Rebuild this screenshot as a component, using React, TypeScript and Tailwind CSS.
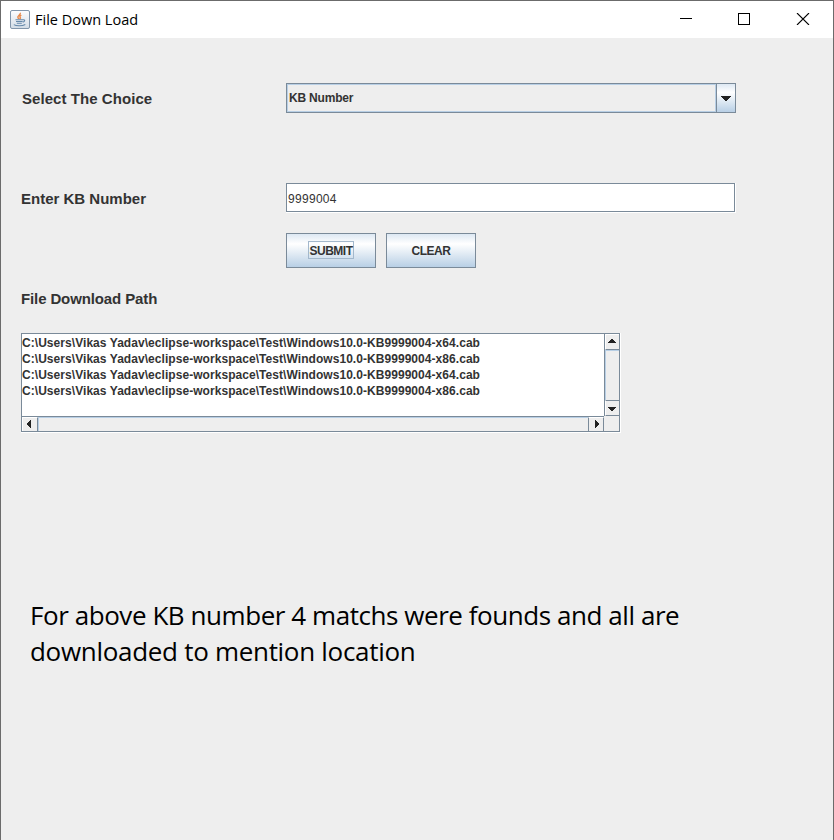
import React from "react";

const files = [
  "C:\\Users\\Vikas Yadav\\eclipse-workspace\\Test\\Windows10.0-KB9999004-x64.cab",
  "C:\\Users\\Vikas Yadav\\eclipse-workspace\\Test\\Windows10.0-KB9999004-x86.cab",
  "C:\\Users\\Vikas Yadav\\eclipse-workspace\\Test\\Windows10.0-KB9999004-x64.cab",
  "C:\\Users\\Vikas Yadav\\eclipse-workspace\\Test\\Windows10.0-KB9999004-x86.cab",
];

const metal = "bg-[linear-gradient(180deg,#dde8f3_0%,#ffffff_30%,#b8cfe5_100%)]";

function JavaIcon() {
  return (
    <svg width="20" height="19" viewBox="0 0 20 19" fill="none">
      <defs>
        <linearGradient id="tile" x1="0" y1="0" x2="0" y2="1">
          <stop offset="0" stopColor="#fdfdfe" />
          <stop offset="1" stopColor="#d2dce6" />
        </linearGradient>
      </defs>
      <rect x="0.5" y="0.5" width="19" height="18" rx="1.5" fill="url(#tile)" stroke="#8296ab" />
      <path d="M10.300 2.800c.8 2-3.400 2.800-2.400 4.800.3.600 1 1 1 1.500M11.300 5.200c-1.800 1-1.700 1.700-.9 2.500.3.500-.1.800-.5 1.200" stroke="#e8894a" strokeWidth="1.400" />
      <path d="M5.500 9.800h7.500M6 11.500h6.500M6.800 13.200h5M13 9.800c2.500-.4 2 2-.3 2.300M3.800 14.600c2.500 1.500 8.500 1.500 11.500-.2" stroke="#6488aa" strokeWidth="1.100" />
    </svg>
  );
}

function Arrow({ d, w, h }: { d: string; w: number; h: number }) {
  return (
    <svg width={w} height={h} viewBox={`0 0 ${w} ${h}`} shapeRendering="crispEdges">
      <path d={d} fill="#222" />
    </svg>
  );
}

export default function App() {
  return (
    <div className="flex h-[840px] w-[834px] flex-col overflow-hidden border-x border-t border-[#6b6b6b] bg-[#eeeeee] font-['Liberation_Sans',Arial,sans-serif] text-[#333333]">
      <header className="flex h-[37px] shrink-0 items-center bg-white pl-[9px] font-['Open_Sans','Segoe_UI',sans-serif] text-black">
        <JavaIcon />
        <span className="ml-[5px] whitespace-nowrap text-[14.5px] leading-5">File Down Load</span>
        <svg className="mb-px ml-auto mr-[23px] shrink-0" width="130" height="12" viewBox="0 0 130 12" fill="none" stroke="black">
          <path d="M0 5.500h12M58.500.5h11v11h-11z" shapeRendering="crispEdges" />
          <path d="M117 0l12 12m0-12l-12 12" strokeWidth="1.100" />
        </svg>
      </header>

      <main className="flex flex-col pl-5 pt-[45px]">
        <div className="flex h-[30px] items-center">
          <label className="w-[265px] whitespace-nowrap pl-px pt-[2px] text-[15px] font-bold leading-5 tracking-[0.06px]">Select The Choice</label>
          <div className="flex h-[30px] w-[450px] border border-[#7a8a99]">
            <div className="flex flex-1 items-center border border-[#b8cfe5] pl-px text-[12px] font-bold leading-4 tracking-[-0.2px]">KB Number</div>
            <div className={`flex w-[19px] items-center justify-center border-l border-[#7a8a99] ${metal}`}>
              <Arrow w={10} h={5} d="M0 0h10v1H0zM1 1h8v1H1zM2 2h6v1H2zM3 3h4v1H3zM4 4h2v1H4z" />
            </div>
          </div>
        </div>

        <div className="mt-[70px] flex h-[30px]">
          <label className="w-[265px] whitespace-nowrap pt-px text-[15px] font-bold leading-[30px]">Enter KB Number</label>
          <div className="h-[30px] w-[450px] border-b border-r border-white">
            <div className="flex h-[29px] w-[449px] items-center border border-[#7a8a99] bg-white pl-px pt-[2px] text-[12px] leading-4 tracking-[0.3px]">9999004</div>
          </div>
        </div>

        <div className="ml-[265px] mt-5 flex gap-[10px] text-[12px] font-bold tracking-[-0.5px]">
          <button className={`flex h-[35px] w-[90px] items-start justify-center border border-[#7a8a99] pt-[7px] ${metal}`}>
            <span className="flex h-[18px] w-[46px] items-center justify-center border border-[#a3b8cc] pt-px">SUBMIT</span>
          </button>
          <button className={`flex h-[35px] w-[90px] items-center justify-center border border-[#7a8a99] ${metal}`}>CLEAR</button>
        </div>

        <h2 className="mt-5 whitespace-nowrap text-[15px] font-bold leading-[22px] tracking-[-0.12px]">File Download Path</h2>

        <section className="mt-[23px] h-[100px] w-[600px] border-b border-r border-white">
          <div className="grid h-[99px] w-[599px] grid-cols-[582px_15px] grid-rows-[82px_15px] border border-[#7a8a99]">
            <div className="bg-white pt-px">
              {files.map((file, i) => (
                <p key={i} className="h-4 whitespace-nowrap text-[12px] font-bold leading-4 tracking-[0.053px]">{file}</p>
              ))}
            </div>
            <div className="flex flex-col border-l border-[#7a8a99]">
              <div className="flex h-4 justify-start border-b border-l border-t border-b-[#7a8a99] border-l-white border-t-white pl-[2px] pt-1">
                <Arrow w={8} h={4} d="M3 0h2v1H3zM2 1h4v1H2zM1 2h6v1H1zM0 3h8v1H0z" />
              </div>
              <div className="h-[50px] border-l border-t border-[#b8cfe5]" />
              <div className="flex h-4 justify-start border-y border-l border-y-[#7a8a99] border-l-white pl-[2px] pt-[6px]">
                <Arrow w={8} h={4} d="M0 0h8v1H0zM1 1h6v1H1zM2 2h4v1H2zM3 3h2v1H3z" />
              </div>
            </div>
            <div className="flex border-t border-[#7a8a99]">
              <div className="flex w-4 border-l border-r border-t border-l-white border-r-[#7a8a99] border-t-white pl-1 pt-[2px]">
                <Arrow w={4} h={8} d="M3 0h1v8H3zM2 1h1v6H2zM1 2h1v4H1zM0 3h1v2H0z" />
              </div>
              <div className="flex-1 border-l border-t border-[#b8cfe5]" />
              <div className="flex w-4 border-x border-t border-x-[#7a8a99] border-t-white pl-[6px] pt-[2px]">
                <Arrow w={4} h={8} d="M0 0h1v8H0zM1 1h1v6H1zM2 2h1v4H2zM3 3h1v2H3z" />
              </div>
            </div>
            <div />
          </div>
        </section>

        <p className="ml-[9px] mt-[164px] whitespace-nowrap font-['Open_Sans','Segoe_UI',sans-serif] text-[26px] leading-9 tracking-[-0.44px] text-black">
          For above KB number 4 matchs were founds and all are
          <br />
          <span className="tracking-[-0.3px]">downloaded to mention location</span>
        </p>
      </main>
    </div>
  );
}
